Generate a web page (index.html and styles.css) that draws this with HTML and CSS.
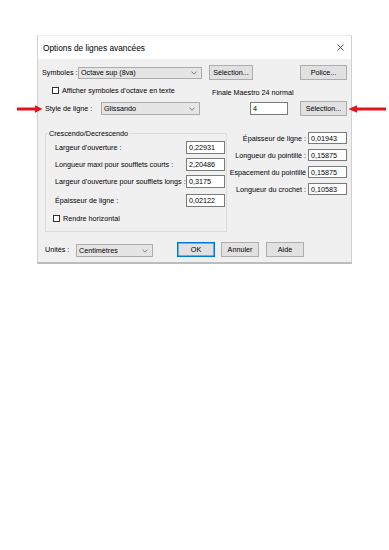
FILE: index.html
```html
<!DOCTYPE html>
<html lang="fr">
<head>
<meta charset="utf-8">
<title>Options de lignes avancées</title>
<link rel="stylesheet" href="styles.css">
</head>
<body>
<div class="dialog">
  <div class="titlebar">
    <span class="title">Options de lignes avancées</span>
    <svg class="close" viewBox="0 0 7 7"><path d="M0.5 0.5L6.5 6.5M6.5 0.5L0.5 6.5" stroke="#3a3a3a" stroke-width="0.9" fill="none"/></svg>
  </div>
  <div class="content">
    <div class="row row1">
      <span class="lbl lbl-sym">Symboles :</span>
      <div class="combo combo-sym"><span>Octave sup (8va)</span><svg class="chev" viewBox="0 0 6 4"><polyline points="0.5,0.6 3,3.2 5.5,0.6" fill="none" stroke="#666" stroke-width="0.8"/></svg></div>
      <button class="btn btn-sel1">Sélection...</button>
      <button class="btn btn-police">Police...</button>
    </div>
    <div class="row row2">
      <div class="check check-octave"><span class="box"></span><span>Afficher symboles d'octave en texte</span></div>
      <span class="font-name">Finale Maestro 24 normal</span>
    </div>
    <div class="row row3">
      <span class="lbl lbl-style">Style de ligne :</span>
      <div class="combo combo-style"><span>Glissando</span><svg class="chev" viewBox="0 0 6 4"><polyline points="0.5,0.6 3,3.2 5.5,0.6" fill="none" stroke="#666" stroke-width="0.8"/></svg></div>
      <div class="field field-num">4</div>
      <button class="btn btn-sel2">Sélection...</button>
    </div>
    <div class="main">
      <fieldset class="group">
        <legend>Crescendo/Decrescendo</legend>
        <div class="grow gr1"><span>Largeur d'ouverture :</span><div class="field gfield">0,22931</div></div>
        <div class="grow gr2"><span>Longueur maxi pour soufflets courts :</span><div class="field gfield">2,20486</div></div>
        <div class="grow gr3"><span>Largeur d'ouverture pour soufflets longs :</span><div class="field gfield">0,3175</div></div>
        <div class="grow gr4"><span>Épaisseur de ligne :</span><div class="field gfield">0,02122</div></div>
        <div class="check check-horiz"><span class="box"></span><span>Rendre horizontal</span></div>
      </fieldset>
      <div class="props">
        <div class="prow"><span class="plbl">Épaisseur de ligne :</span><div class="field pfield">0,01943</div></div>
        <div class="prow"><span class="plbl">Longueur du pointillé :</span><div class="field pfield">0,15875</div></div>
        <div class="prow"><span class="plbl">Espacement du pointillé</span><div class="field pfield">0,15875</div></div>
        <div class="prow"><span class="plbl">Longueur du crochet :</span><div class="field pfield">0,10583</div></div>
      </div>
    </div>
    <div class="row footer">
      <span class="lbl lbl-units">Unités :</span>
      <div class="combo combo-units"><span>Centimètres</span><svg class="chev" viewBox="0 0 6 4"><polyline points="0.5,0.6 3,3.2 5.5,0.6" fill="none" stroke="#666" stroke-width="0.8"/></svg></div>
      <button class="btn btn-ok">OK</button>
      <button class="btn btn-cancel">Annuler</button>
      <button class="btn btn-help">Aide</button>
    </div>
  </div>
</div>
<svg class="arrow arrow-left" viewBox="0 0 26 8"><path d="M0 2.6H18V0.2L25.5 4L18 7.8V5.4H0Z" fill="#e3141c"/></svg>
<svg class="arrow arrow-right" viewBox="0 0 38 8"><path d="M38 2.6H9V0.2L0.5 4L9 7.8V5.4H38Z" fill="#e3141c"/></svg>
</body>
</html>
```

FILE: styles.css
```css
* { box-sizing: border-box; }
html, body { margin: 0; padding: 0; background: #fff; }
body {
  font-family: "Liberation Sans", Arial, sans-serif;
  font-size: 7.2px;
  line-height: 9px;
  color: #000;
  position: relative;
  width: 389px;
  height: 550px;
  overflow: hidden;
}
.dialog {
  margin: 35px 0 0 37px;
  width: 315px;
  border: 1px solid #d0d0d0;
  border-top-color: #ececec;
  border-bottom: 2px solid #bcbcbc;
}
.titlebar {
  height: 23px;
  background: #fff;
  display: flex;
  align-items: center;
  padding-left: 5px;
}
.title { font-size: 8.3px; line-height: 10px; }
.close { margin-left: auto; margin-right: 7px; width: 7px; height: 7px; }
.content {
  background: #f0f0f0;
  padding: 6px 4px 5px 0;
}
.row { display: flex; align-items: center; }
.combo {
  display: flex;
  align-items: center;
  background: #e5e5e5;
  border: 1px solid #acacac;
  padding-left: 2px;
  white-space: nowrap;
}
.chev { width: 6px; height: 4px; margin-left: auto; margin-right: 4px; }
.btn {
  font: inherit;
  color: #000;
  background: #e1e1e1;
  border: 1px solid #adadad;
  padding: 0;
  height: 15px;
  text-align: center;
}
.field {
  background: #fff;
  border: 1px solid #7a7a7a;
  padding-left: 2px;
  display: flex;
  align-items: center;
}
.check { display: flex; align-items: center; }
.box {
  width: 7px;
  height: 7px;
  border: 1px solid #333;
  background: #fff;
  margin-right: 3px;
}

/* row 1 */
.row1 { height: 15px; padding-left: 4px; }
.lbl-sym { width: 36px; }
.combo-sym { width: 124px; height: 12px; }
.btn-sel1 { width: 44px; margin-left: 7px; }
.btn-police { width: 47px; margin-left: auto; }

/* row 2 */
.row2 { height: 14px; margin-top: 4px; align-items: flex-start; }
.check-octave { width: 174px; padding-left: 14px; padding-top: 2px; }
.font-name { align-self: flex-end; margin-bottom: 1px; }

/* row 3 */
.row3 { height: 15px; margin-top: 3px; padding-left: 7px; }
.lbl-style { width: 56px; }
.combo-style { width: 99px; height: 13px; }
.field-num { width: 38px; height: 13px; margin-left: 50px; }
.btn-sel2 { width: 47px; margin-left: auto; }

/* main area */
.main { display: flex; margin-top: 13px; }
.group {
  margin: 0 0 0 7px;
  width: 182px;
  border: 1px solid #dcdcdc;
  padding: 3px 1px 8px 9px;
  min-width: 0;
}
.group legend { padding: 0 1px; margin-left: -7px; line-height: 9px; }
.grow { display: flex; align-items: center; justify-content: space-between; height: 13px; white-space: nowrap; }
.gr2, .gr3 { margin-top: 4px; }
.gr4 { margin-top: 6px; }
.gfield { width: 39px; height: 13px; }
.check-horiz { margin-top: 7px; margin-left: -2px; height: 9px; }

.props { flex: 1; padding-top: 3px; }
.prow { display: flex; align-items: center; justify-content: flex-end; height: 12px; margin-bottom: 5px; white-space: nowrap; }
.plbl { margin-right: 2px; }
.pfield { width: 39px; height: 12px; }

/* footer */
.footer { height: 15px; margin-top: 10px; padding-left: 7px; }
.lbl-units { width: 31px; }
.combo-units { width: 77px; height: 13px; align-self: flex-end; }
.btn-ok { width: 38px; margin-left: 24px; border-color: #0078d7; box-shadow: inset 0 0 0 0.5px #0078d7; }
.btn-cancel { width: 38px; margin-left: 6px; }
.btn-help { width: 38px; margin-left: 7px; }

/* annotation arrows */
.arrow { position: absolute; height: 8px; }
.arrow-left { left: 17px; top: 105px; width: 26px; }
.arrow-right { left: 348px; top: 105px; width: 38px; }
```
